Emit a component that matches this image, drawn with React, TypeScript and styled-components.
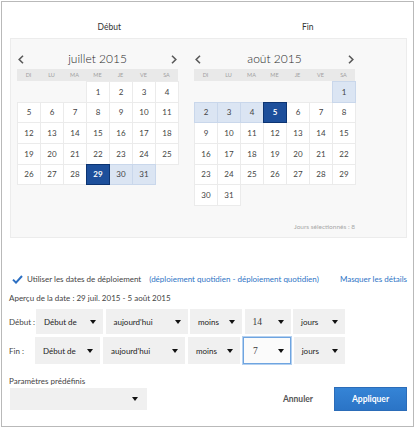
import React from "react";
import styled, { createGlobalStyle, css } from "styled-components";

const Global = createGlobalStyle`
  html, body { margin: 0; padding: 0; background: #fff; }
  body { font-family: Lato, "Open Sans", sans-serif; }
`;

const Frame = styled.div`
  box-sizing: border-box;
  width: 413px;
  height: 426px;
  margin: 1px 0 0 1px;
  border: 1px solid #b9b9b9;
  padding: 0 6px 0 8px;
`;

const Headings = styled.div`
  box-sizing: border-box;
  display: grid;
  grid-template-columns: 1fr 1fr;
  height: 36px;
  padding-top: 19px;
`;

const Heading = styled.div`
  text-align: center;
  font-size: 8.5px;
  line-height: 12px;
  color: #333;
`;

const Panel = styled.div`
  box-sizing: border-box;
  height: 200px;
  border: 1px solid #ececec;
  background: #f8f8f8;
  padding: 10px 0 0 6px;
  display: flex;
  gap: 16px;
`;

const Calendar = styled.div`
  width: 161px;
  display: flex;
  flex-direction: column;
`;

const Nav = styled.div`
  height: 20px;
  display: flex;
  align-items: center;
  justify-content: space-between;
  padding: 0 1px;
`;

const Title = styled.div`
  font-size: 12px;
  font-weight: 300;
  color: #2a2a2a;
  line-height: 14px;
`;

const Grid7 = styled.div`
  display: grid;
  grid-template-columns: repeat(7, 23px);
`;

const WeekHeader = styled(Grid7)`
  height: 12px;
  background: #e9e9e9;
`;

const WeekDay = styled.div`
  font-size: 5.5px;
  color: #a0a0a0;
  text-align: center;
  line-height: 12px;
`;

const Days = styled(Grid7)`
  grid-auto-rows: 20.67px;
`;

type DayState = "normal" | "range" | "edge" | "empty";

const Day = styled.div<{ $state: DayState }>`
  box-sizing: border-box;
  margin: 0 -1px -1px 0;
  display: flex;
  align-items: center;
  justify-content: center;
  font-size: 8px;
  ${({ $state }) =>
    $state === "empty"
      ? css`
          visibility: hidden;
        `
      : $state === "edge"
      ? css`
          position: relative;
          z-index: 2;
          background: #1d4f9b;
          border: 1px solid #0c3472;
          color: #fff;
          font-weight: 700;
        `
      : $state === "range"
      ? css`
          position: relative;
          z-index: 1;
          background: #dbe5f3;
          border: 1px solid #c9d7eb;
          color: #444;
        `
      : css`
          background: #fff;
          border: 1px solid #ebebeb;
          color: #444;
        `}
`;

const Summary = styled.div`
  margin-top: 17px;
  text-align: right;
  font-size: 6.5px;
  line-height: 10px;
  color: #a8a8a8;
`;

const Options = styled.div`
  margin: 34px 0 0 -1px;
  display: flex;
  flex-direction: column;
  font-size: 8px;
  color: #444;
`;

const Line = styled.div<{ $mt?: number; $h?: number }>`
  display: flex;
  align-items: center;
  height: ${({ $h }) => $h ?? 14}px;
  margin-top: ${({ $mt }) => $mt ?? 0}px;
  white-space: nowrap;
`;

const Check = styled.svg`
  width: 11px;
  height: 9px;
  margin: 0 4px 0 3px;
`;

const Link = styled.span<{ $push?: boolean }>`
  color: #2f74c5;
  margin-left: ${({ $push }) => ($push ? "auto" : "8px")};
`;

const RowLabel = styled.div<{ $w: number }>`
  width: ${({ $w }) => $w}px;
  flex: none;
`;

const SelectRow = styled.div<{ $mt: number; $h: number; $gap: number }>`
  display: flex;
  align-items: stretch;
  height: ${({ $h }) => $h}px;
  margin-top: ${({ $mt }) => $mt}px;
  gap: ${({ $gap }) => $gap}px;
  white-space: nowrap;
  & > ${RowLabel} {
    display: flex;
    align-items: center;
  }
`;

const Select = styled.div<{ $w: number; $focus?: boolean; $serif?: boolean }>`
  box-sizing: border-box;
  width: ${({ $w }) => $w}px;
  flex: none;
  display: flex;
  align-items: center;
  justify-content: space-between;
  padding: 0 7px 0 8px;
  background: #f0f0f0;
  color: #222;
  font-size: 8px;
  ${({ $serif }) =>
    $serif &&
    css`
      font-family: "Liberation Serif", serif;
      font-size: 9.5px;
      color: #3a3a3a;
    `}
  ${({ $focus }) =>
    $focus &&
    css`
      background: #fbfbfb;
      border: 1px solid #6ea4e0;
      box-shadow: 0 0 0 1px #b3d0f0;
      padding: 0 6px 0 9px;
    `}
`;

const Caret = styled.span`
  width: 0;
  height: 0;
  border-left: 3.5px solid transparent;
  border-right: 3.5px solid transparent;
  border-top: 4px solid #111;
`;

const Footer = styled.div`
  display: flex;
  align-items: center;
  height: 24px;
`;

const Preset = styled(Select)`
  height: 22px;
  margin-left: 1px;
  justify-content: flex-end;
  padding-right: 9px;
`;

const Cancel = styled.span`
  margin-left: auto;
  margin-right: 21px;
  color: #555;
  font-weight: 700;
  font-size: 8.5px;
`;

const Apply = styled.button`
  box-sizing: border-box;
  width: 73px;
  height: 24px;
  border: 1px solid #2b6cb8;
  background: linear-gradient(#3584d6, #2b74c6);
  color: #fff;
  font-family: inherit;
  font-weight: 700;
  font-size: 8.5px;
  padding: 0;
`;

const Chevron = ({ dir }: { dir: "l" | "r" }) => (
  <svg width="6" height="9" viewBox="0 0 6 9">
    <path
      d={dir === "l" ? "M5 0.8 L1.2 4.5 L5 8.2" : "M1 0.8 L4.8 4.5 L1 8.2"}
      fill="none"
      stroke="#5a5a5a"
      strokeWidth="1.6"
    />
  </svg>
);

const WEEK = ["DI", "LU", "MA", "ME", "JE", "VE", "SA"];

type Month = {
  title: string;
  offset: number;
  days: number;
  range: number[];
  edge: number[];
  summary?: string;
};

const months: Month[] = [
  { title: "juillet 2015", offset: 3, days: 31, range: [30, 31], edge: [29] },
  {
    title: "août 2015",
    offset: 6,
    days: 31,
    range: [1, 2, 3, 4],
    edge: [5],
    summary: "Jours sélectionnés : 8",
  },
];

const MonthView = ({ m }: { m: Month }) => {
  const cells: { d: number | null; s: DayState }[] = [];
  for (let i = 0; i < m.offset; i++) cells.push({ d: null, s: "empty" });
  for (let d = 1; d <= m.days; d++)
    cells.push({
      d,
      s: m.edge.includes(d) ? "edge" : m.range.includes(d) ? "range" : "normal",
    });
  return (
    <Calendar>
      <Nav>
        <Chevron dir="l" />
        <Title>{m.title}</Title>
        <Chevron dir="r" />
      </Nav>
      <WeekHeader>
        {WEEK.map((w) => (
          <WeekDay key={w}>{w}</WeekDay>
        ))}
      </WeekHeader>
      <Days>
        {cells.map((c, i) => (
          <Day key={i} $state={c.s}>
            {c.d ?? ""}
          </Day>
        ))}
      </Days>
      {m.summary && <Summary>{m.summary}</Summary>}
    </Calendar>
  );
};

type Sel = { label: string; w: number; focus?: boolean; serif?: boolean };

const rows: { label: string; lw: number; mt: number; h: number; gap: number; sels: Sel[] }[] = [
  {
    label: "Début :",
    lw: 27,
    mt: 4,
    h: 25,
    gap: 2.5,
    sels: [
      { label: "Début de", w: 67 },
      { label: "aujourd'hui", w: 82 },
      { label: "moins", w: 52 },
      { label: "14", w: 46, serif: true },
      { label: "jours", w: 52 },
    ],
  },
  {
    label: "Fin :",
    lw: 26,
    mt: 3,
    h: 27,
    gap: 3,
    sels: [
      { label: "Début de", w: 65 },
      { label: "aujourd'hui", w: 82 },
      { label: "moins", w: 52 },
      { label: "7", w: 47.7, serif: true, focus: true },
      { label: "jours", w: 51 },
    ],
  },
];

export default function App() {
  return (
    <>
      <Global />
      <Frame>
        <Headings>
          <Heading>Début</Heading>
          <Heading>Fin</Heading>
        </Headings>
        <Panel>
          {months.map((m) => (
            <MonthView key={m.title} m={m} />
          ))}
        </Panel>
        <Options>
          <Line>
            <Check viewBox="0 0 11 9">
              <path d="M1 4.6 L4 7.6 L10 1" fill="none" stroke="#2c6fc2" strokeWidth="2" />
            </Check>
            <span>Utiliser les dates de déploiement</span>
            <Link>(déploiement quotidien - déploiement quotidien)</Link>
            <Link $push>Masquer les détails</Link>
          </Line>
          <Line $mt={5}>Aperçu de la date : 29 juil. 2015 - 5 août 2015</Line>
          {rows.map((r) => (
            <SelectRow key={r.label} $mt={r.mt} $h={r.h} $gap={r.gap}>
              <RowLabel $w={r.lw - r.gap}>{r.label}</RowLabel>
              {r.sels.map((s, i) => (
                <Select key={i} $w={s.w} $focus={s.focus} $serif={s.serif}>
                  <span>{s.label}</span>
                  <Caret />
                </Select>
              ))}
            </SelectRow>
          ))}
          <Line $mt={11} $h={12}>Paramètres prédéfinis</Line>
          <Footer>
            <Preset $w={137}>
              <Caret />
            </Preset>
            <Cancel>Annuler</Cancel>
            <Apply>Appliquer</Apply>
          </Footer>
        </Options>
      </Frame>
    </>
  );
}
